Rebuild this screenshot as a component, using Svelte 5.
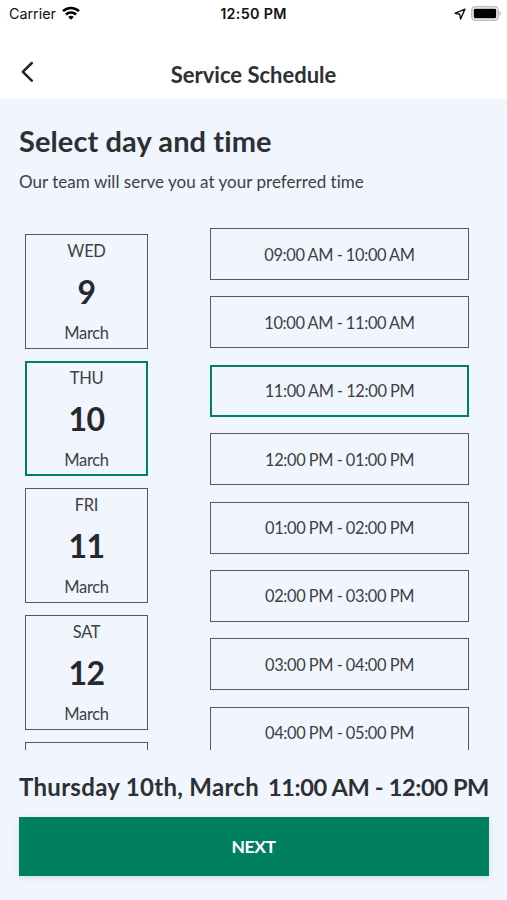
<!--
  ServiceSchedule
  Day and time picker: days on the left, hourly slots on the right,
  the current choice and the NEXT button at the bottom.
-->
<script lang="ts">
  interface Day {
    weekday: string;
    fullName: string;
    date: number;
    month: string;
  }

  const days: Day[] = [
    { weekday: 'WED', fullName: 'Wednesday', date: 9, month: 'March' },
    { weekday: 'THU', fullName: 'Thursday', date: 10, month: 'March' },
    { weekday: 'FRI', fullName: 'Friday', date: 11, month: 'March' },
    { weekday: 'SAT', fullName: 'Saturday', date: 12, month: 'March' },
    { weekday: 'SUN', fullName: 'Sunday', date: 13, month: 'March' }
  ];

  const slots: string[] = [
    '09:00 AM - 10:00 AM',
    '10:00 AM - 11:00 AM',
    '11:00 AM - 12:00 PM',
    '12:00 PM - 01:00 PM',
    '01:00 PM - 02:00 PM',
    '02:00 PM - 03:00 PM',
    '03:00 PM - 04:00 PM',
    '04:00 PM - 05:00 PM'
  ];

  let selectedDay = $state(1);
  let selectedSlot = $state(2);

  const day = $derived(days[selectedDay]);
</script>

<div class="screen">
  <header class="top">
    <div class="status-bar">
      <div class="status-left">
        <span>Carrier</span>
        <svg class="wifi" viewBox="0 0 18 14" width="18" height="14">
          <g fill="none" stroke="#000" stroke-width="2.5">
            <path d="M1 5.2a11.3 11.3 0 0 1 16 0" />
            <path d="M3.9 8.5a7.2 7.2 0 0 1 10.2 0" />
          </g>
          <path d="M9 13.8 6.2 11a4 4 0 0 1 5.6 0z" />
        </svg>
      </div>
      <span class="clock">12:50 PM</span>
      <div class="status-right">
        <svg viewBox="0 0 12 12" width="12" height="12">
          <path d="M10.9 1.1 1 5.3l4.7.9.9 4.8z" fill="none" stroke="#111" stroke-width="1.4" stroke-linejoin="round" />
        </svg>
        <svg viewBox="0 0 31 15" width="31" height="15">
          <rect x="0.8" y="0.8" width="26.4" height="13.4" rx="3.6" fill="#fff" stroke="#bdbdbd" stroke-width="1.6" />
          <rect x="2.8" y="2.8" width="22.4" height="9.4" rx="1.4" />
          <path d="M28.4 5.2c2 .5 2 4.1 0 4.6z" fill="#bdbdbd" />
        </svg>
      </div>
    </div>

    <div class="nav-bar">
      <button type="button" class="back" aria-label="Back">
        <svg viewBox="0 0 14 22" width="14" height="22">
          <path d="M11.8 2 2.8 10.9l9 8.8" fill="none" stroke="#222" stroke-width="2.5" stroke-linecap="round" stroke-linejoin="round" />
        </svg>
      </button>
      <h1 class="title">Service Schedule</h1>
    </div>
  </header>

  <main class="content">
    <h2 class="heading">Select day and time</h2>
    <p class="subheading">Our team will serve you at your preferred time</p>

    <div class="picker">
      <div class="days">
        {#each days as d, i}
          <button type="button" class="day" class:selected={selectedDay === i} onclick={() => (selectedDay = i)}>
            <span>{d.weekday}</span>
            <span class="date">{d.date}</span>
            <span>{d.month}</span>
          </button>
        {/each}
      </div>

      <div class="slots">
        {#each slots as slot, i}
          <button type="button" class="slot" class:selected={selectedSlot === i} onclick={() => (selectedSlot = i)}>
            {slot}
          </button>
        {/each}
      </div>
    </div>

    <div class="summary">
      <span class="summary-day">{day.fullName} {day.date}th, {day.month}</span>
      <span class="summary-time">{slots[selectedSlot]}</span>
    </div>

    <button type="button" class="next">NEXT</button>
  </main>
</div>

<style>
  :global(body) {
    background: #f1f5fe;
  }

  .screen {
    display: flex;
    flex-direction: column;
    width: 507px;
    height: 900px;
    overflow: hidden;
    background: #f1f5fe;
    color: #2d3033;
    font-family: Lato, sans-serif;
    font-variant-ligatures: none;
  }

  button {
    padding: 0;
    border: none;
    border-radius: 0;
    background: none;
    color: inherit;
    font: inherit;
    letter-spacing: inherit;
    word-spacing: inherit;
    cursor: pointer;
  }

  /* ── Status bar and navigation ── */
  .top {
    flex: none;
    height: 99px;
    background: #fff;
  }

  .status-bar {
    display: grid;
    grid-template-columns: 1fr auto 1fr;
    align-items: center;
    height: 27px;
    padding: 0 5px 0 9px;
    color: #111;
    font-family: Inter, sans-serif;
    font-size: 14.3px;
  }

  .status-left,
  .status-right {
    display: flex;
    align-items: center;
    gap: 6px;
  }

  .wifi {
    margin-top: -2px;
  }

  .status-right {
    justify-content: flex-end;
    gap: 5px;
  }

  .clock {
    padding-right: 4px;
    font-weight: 600;
    letter-spacing: 0.35px;
  }

  .nav-bar {
    display: grid;
    grid-template-columns: 40px 1fr 40px;
    align-items: start;
    height: 72px;
    padding: 0 14px 0 20px;
  }

  .back {
    display: flex;
    margin-top: 34px;
  }

  .title {
    margin: 35px 0 0;
    padding-right: 6px;
    font-size: 22px;
    font-weight: 700;
    line-height: 26px;
    text-align: center;
  }

  /* ── Body ── */
  .content {
    display: flex;
    flex: 1;
    flex-direction: column;
    min-height: 0;
    padding: 0 18px 24px 19px;
  }

  .heading {
    margin: 24px 0 0;
    font-size: 29px;
    font-weight: 700;
    letter-spacing: 0.1px;
    line-height: 36px;
  }

  .subheading {
    margin: 12px 0 0;
    color: #3d4044;
    font-size: 17px;
    letter-spacing: 0.03px;
    line-height: 22px;
  }

  .picker {
    display: flex;
    justify-content: space-between;
    height: 522px;
    margin-top: 35px;
    padding: 0 20px 0 6px;
    overflow: hidden;
    color: #3d4044;
    font-size: 16.5px;
  }

  .days {
    display: flex;
    flex-direction: column;
    gap: 12px;
    padding-top: 6px;
    letter-spacing: -0.3px;
  }

  .day {
    display: flex;
    flex: none;
    flex-direction: column;
    align-items: center;
    justify-content: space-between;
    box-sizing: border-box;
    width: 123px;
    height: 115px;
    padding: 5px 0 4px;
    border: 1.5px solid #55585c;
    line-height: 22px;
  }

  .date {
    color: #26292c;
    font-size: 32px;
    font-weight: 700;
    letter-spacing: -0.5px;
    line-height: 40px;
  }

  .slots {
    display: flex;
    flex-direction: column;
    gap: 16.4px;
    font-size: 16.4px;
    letter-spacing: -0.35px;
    word-spacing: -0.4px;
  }

  .slot {
    flex: none;
    box-sizing: border-box;
    width: 259px;
    height: 52px;
    border: 1.5px solid #55585c;
  }

  .day.selected,
  .slot.selected {
    border: 2px solid #007f61;
  }

  .day.selected {
    padding: 4px 0 3px;
  }

  /* ── Summary and action ── */
  .summary {
    display: flex;
    justify-content: space-between;
    margin-top: 22px;
    font-size: 24px;
    font-weight: 700;
    line-height: 30px;
    white-space: nowrap;
  }

  .summary-day {
    letter-spacing: 0.3px;
  }

  .summary-time {
    font-size: 23.6px;
    letter-spacing: -0.4px;
    word-spacing: 0.1px;
  }

  .next {
    flex: none;
    height: 59px;
    margin-top: 15px;
    padding-right: 1px;
    background: #007f61;
    box-shadow: 0 2px 6px rgba(0, 60, 60, 0.12);
    color: #fff;
    font-size: 17.5px;
    font-weight: 700;
    letter-spacing: -0.4px;
  }
</style>
